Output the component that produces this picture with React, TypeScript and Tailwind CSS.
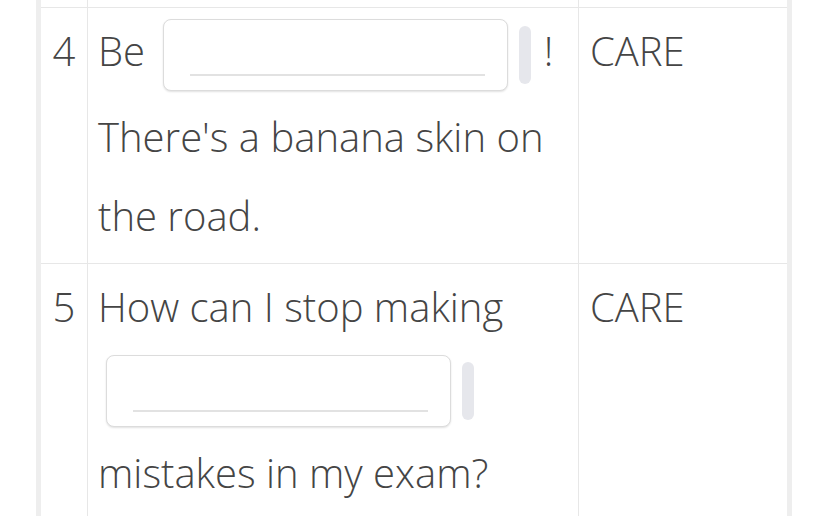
import React from "react";

function Blank() {
  return (
    <span className="inline-flex items-center align-middle ml-[8px] mr-[2px] my-[6px]">
      <span className="relative inline-block w-[345px] h-[72px] rounded-[8px] border-[1.5px] border-[#dcdcdc] bg-white shadow-[0_1px_2px_rgba(0,0,0,0.12)]">
        <span className="absolute left-[26px] right-[22px] top-[54px] h-[2px] bg-[#e2e2e2]" />
      </span>
      <span className="inline-block ml-[11px] w-[12px] h-[58px] rounded-full bg-[#e6e7ec]" />
    </span>
  );
}

export default function App() {
  return (
    <div
      className="w-[828px] h-[516px] overflow-hidden bg-white text-[#454545]"
      style={{ fontFamily: '"Open Sans", "Noto Sans", sans-serif' }}
    >
      <div className="ml-[36px] w-[756px] border-x-[5px] border-[#eeeeee]">
        {/* partial row above */}
        <div className="flex h-[8px] border-b border-[#e7e7e7]">
          <div className="w-[47px] border-r border-[#e7e7e7]" />
          <div className="w-[491px] border-r border-[#e7e7e7]" />
          <div className="flex-1" />
        </div>

        {/* row 4 */}
        <div className="flex border-b border-[#e7e7e7] text-[40px] font-light leading-[79px]">
          <div className="w-[47px] border-r border-[#e7e7e7] text-center pt-[3px]">4</div>
          <div className="w-[491px] border-r border-[#e7e7e7] pl-[10px] pr-[2px] pt-[3px] pb-[8px]">
            Be <Blank /> ! There's a banana skin on the road.
          </div>
          <div className="flex-1 pl-[11px] pt-[3px]">CARE</div>
        </div>

        {/* row 5 */}
        <div className="flex border-b border-[#e7e7e7] text-[40px] font-light leading-[79px]">
          <div className="w-[47px] border-r border-[#e7e7e7] text-center pt-[3px]">5</div>
          <div className="w-[491px] border-r border-[#e7e7e7] pl-[10px] pr-[2px] pt-[3px] pb-[8px]">
            How can I stop making <Blank /> mistakes in my exam?
          </div>
          <div className="flex-1 pl-[11px] pt-[3px]">CARE</div>
        </div>
      </div>
    </div>
  );
}
